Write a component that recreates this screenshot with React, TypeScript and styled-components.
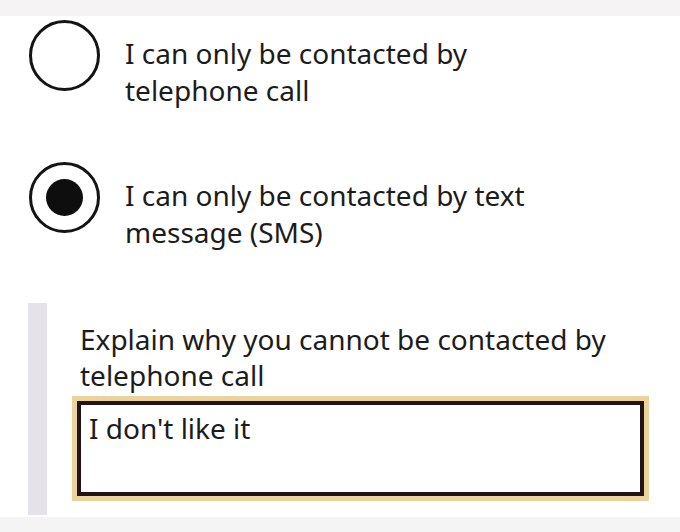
import styled, { createGlobalStyle } from "styled-components";

const GlobalStyle = createGlobalStyle`
  html, body {
    margin: 0;
    padding: 0;
    background: #ffffff;
  }
  body {
    font-family: "Noto Sans", "Open Sans", Arial, sans-serif;
    color: #1c1c1c;
  }
`;

const Page = styled.div`
  width: 680px;
  height: 532px;
  display: flex;
  flex-direction: column;
  overflow: hidden;
`;

const TopStrip = styled.div`
  flex: none;
  height: 16px;
  background: #f6f3f4;
`;

const Form = styled.div`
  flex: 1;
  display: flex;
  flex-direction: column;
  padding-left: 29px;
`;

const RadioItem = styled.label<{ $top: number }>`
  flex: none;
  display: flex;
  align-items: flex-start;
  gap: 25px;
  margin-top: ${(p) => p.$top}px;
`;

const Circle = styled.span<{ $checked?: boolean }>`
  flex: none;
  width: 71px;
  height: 71px;
  box-sizing: border-box;
  border: 3px solid #141414;
  border-radius: 50%;
  display: flex;
  align-items: center;
  justify-content: center;
  &::after {
    content: "";
    display: ${(p) => (p.$checked ? "block" : "none")};
    width: 37px;
    height: 37px;
    border-radius: 50%;
    background: #0e0e0e;
  }
`;

const RadioText = styled.span`
  font-size: 28px;
  line-height: 37px;
  margin-top: 15px;
`;

const Conditional = styled.div`
  flex: none;
  margin-top: 52px;
  height: 212px;
  display: flex;
`;

const InsetBar = styled.div`
  width: 19px;
  margin-left: -1px;
  background: #e5e3e9;
`;

const ConditionalBody = styled.div`
  padding-left: 33px;
  padding-top: 18px;
  display: flex;
  flex-direction: column;
`;

const Label = styled.label`
  font-size: 28px;
  line-height: 36px;
  margin-bottom: 8px;
`;

const TextBox = styled.textarea`
  width: 567px;
  height: 95px;
  box-sizing: border-box;
  margin: 0 0 0 -3px;
  padding: 6px 8px;
  border: 4px solid #221314;
  outline: 5px solid #ecd39c;
  border-radius: 0;
  resize: none;
  font-family: "Noto Sans", "Open Sans", Arial, sans-serif;
  font-size: 28px;
  line-height: 34px;
  color: #1c1c1c;
  background: #ffffff;
`;

const BottomStrip = styled.div`
  flex: none;
  height: 15px;
  background: #f4f4f4;
`;

export default function App() {
  return (
    <Page>
      <GlobalStyle />
      <TopStrip />
      <Form>
        <RadioItem $top={4}>
          <Circle />
          <RadioText>
            I can only be contacted by
            <br />
            telephone call
          </RadioText>
        </RadioItem>
        <RadioItem $top={53}>
          <Circle $checked />
          <RadioText>
            I can only be contacted by text
            <br />
            message (SMS)
          </RadioText>
        </RadioItem>
        <Conditional>
          <InsetBar />
          <ConditionalBody>
            <Label>
              Explain why you cannot be contacted by
              <br />
              telephone call
            </Label>
            <TextBox defaultValue="I don't like it" spellCheck={false} />
          </ConditionalBody>
        </Conditional>
      </Form>
      <BottomStrip />
    </Page>
  );
}
